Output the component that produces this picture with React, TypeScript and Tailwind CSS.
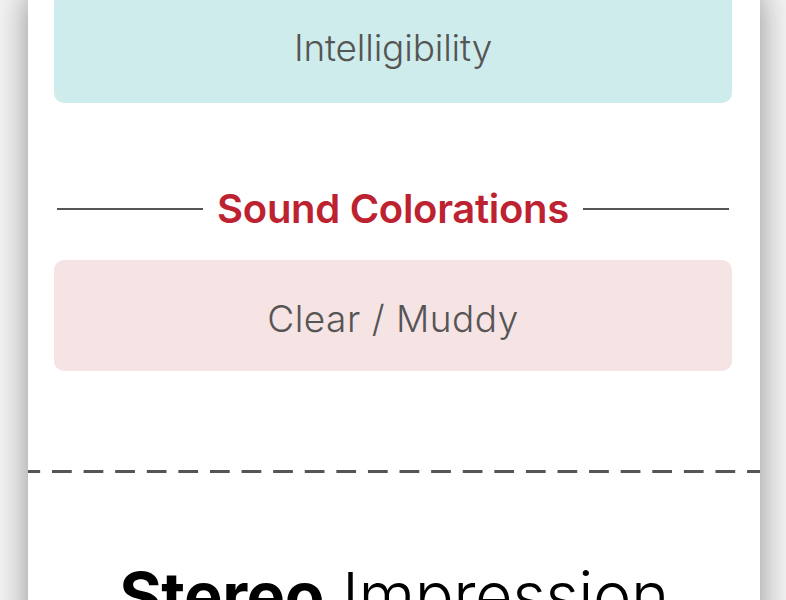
const font = { fontFamily: 'Inter, "Noto Sans", sans-serif' };

export default function App() {
  return (
    <div className="h-screen bg-[#f4f4f4] pl-[28px] pr-[26px] overflow-hidden" style={font}>
      <div className="bg-white shadow-[0_0_32px_rgba(0,0,0,0.42)] pb-10">
        <div className="pl-[26px] pr-[28px]">
          <div className="-mt-[8px] h-[111px] rounded-[10px] bg-[#cfecec] flex items-center justify-center">
            <span className="text-[37px] font-light text-[#555] tracking-[-0.2px]">Intelligibility</span>
          </div>

          <div className="mt-[86px] h-[40px] flex items-center gap-[14px] px-[3px]">
            <div className="flex-1 h-[2px] bg-[#555]" />
            <span className="text-[40px] font-semibold text-[#bd2230] tracking-[-0.3px]">Sound Colorations</span>
            <div className="flex-1 h-[2px] bg-[#555]" />
          </div>

          <div className="mt-[31px] h-[111px] rounded-[10px] bg-[#f6e3e4] flex items-center justify-center pt-[6px]">
            <span className="text-[37px] font-light text-[#555] tracking-[0.5px]">Clear / Muddy</span>
          </div>
        </div>

        <div className="mt-[99px] h-[3px] bg-[linear-gradient(to_right,#555_20px,transparent_20px)] bg-[length:31.6px_3px] bg-[position:24px_0]" />

        <h2 className="mt-[90px] text-center text-[65px] leading-none text-black tracking-[-0.5px]">
          <span className="font-bold">Stereo</span> <span className="font-light">Impression</span>
        </h2>
      </div>
    </div>
  );
}
